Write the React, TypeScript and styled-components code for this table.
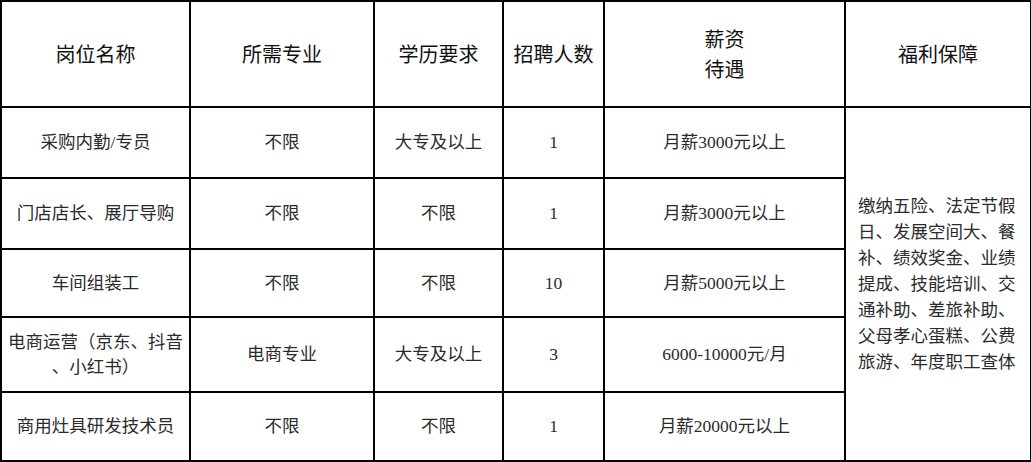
import React from "react";
import styled, { createGlobalStyle } from "styled-components";

const Global = createGlobalStyle`
  html, body { margin: 0; padding: 0; background: #ffffff; }
`;

const Table = styled.table`
  border-collapse: collapse;
  table-layout: fixed;
  width: 1030px;
  font-family: "Liberation Serif", "Noto Sans CJK SC", serif;
  color: #2b2b2b;
`;

const HeadCell = styled.th<{ $h: number }>`
  border: 2px solid #000;
  height: ${(p) => p.$h}px;
  padding: 0 4px;
  box-sizing: border-box;
  font-family: "Noto Sans CJK SC", sans-serif;
  font-weight: 400;
  font-size: 20px;
  line-height: 30px;
  color: #111;
  text-align: center;
  vertical-align: middle;
`;

const Cell = styled.td<{ $h?: number }>`
  border: 2px solid #000;
  ${(p) => (p.$h ? `height: ${p.$h}px;` : "")}
  padding: 0 4px;
  box-sizing: border-box;
  font-size: 17.5px;
  line-height: 25px;
  text-align: center;
  vertical-align: middle;
  white-space: nowrap;
`;

const BenefitCell = styled.td`
  border: 2px solid #000;
  padding: 0 10px 0 12px;
  box-sizing: border-box;
  font-size: 17.5px;
  line-height: 26px;
  text-align: left;
  vertical-align: middle;
  white-space: nowrap;
`;

const cols = [189, 184, 129, 101, 241, 186];

const rows = [
  { h: 71, name: ["采购内勤/专员"], major: "不限", edu: "大专及以上", num: "1", pay: "月薪3000元以上" },
  { h: 71, name: ["门店店长、展厅导购"], major: "不限", edu: "不限", num: "1", pay: "月薪3000元以上" },
  { h: 68, name: ["车间组装工"], major: "不限", edu: "不限", num: "10", pay: "月薪5000元以上" },
  { h: 75, name: ["电商运营（京东、抖音", "、小红书）"], major: "电商专业", edu: "大专及以上", num: "3", pay: "6000-10000元/月" },
  { h: 69, name: ["商用灶具研发技术员"], major: "不限", edu: "不限", num: "1", pay: "月薪20000元以上" },
];

const benefits = [
  "缴纳五险、法定节假",
  "日、发展空间大、餐",
  "补、绩效奖金、业绩",
  "提成、技能培训、交",
  "通补助、差旅补助、",
  "父母孝心蛋糕、公费",
  "旅游、年度职工查体",
];

const Lines: React.FC<{ lines: string[] }> = ({ lines }) => (
  <>
    {lines.map((l, i) => (
      <React.Fragment key={i}>
        {i > 0 && <br />}
        {l}
      </React.Fragment>
    ))}
  </>
);

export default function App() {
  return (
    <>
      <Global />
      <Table>
        <colgroup>
          {cols.map((w, i) => (
            <col key={i} style={{ width: w }} />
          ))}
        </colgroup>
        <thead>
          <tr>
            <HeadCell $h={106}>岗位名称</HeadCell>
            <HeadCell $h={106}>所需专业</HeadCell>
            <HeadCell $h={106}>学历要求</HeadCell>
            <HeadCell $h={106}>招聘人数</HeadCell>
            <HeadCell $h={106}>
              <Lines lines={["薪资", "待遇"]} />
            </HeadCell>
            <HeadCell $h={106}>福利保障</HeadCell>
          </tr>
        </thead>
        <tbody>
          {rows.map((r, i) => (
            <tr key={i}>
              <Cell $h={r.h}>
                <Lines lines={r.name} />
              </Cell>
              <Cell>{r.major}</Cell>
              <Cell>{r.edu}</Cell>
              <Cell>{r.num}</Cell>
              <Cell>{r.pay}</Cell>
              {i === 0 && (
                <BenefitCell rowSpan={5}>
                  <Lines lines={benefits} />
                </BenefitCell>
              )}
            </tr>
          ))}
        </tbody>
      </Table>
    </>
  );
}
